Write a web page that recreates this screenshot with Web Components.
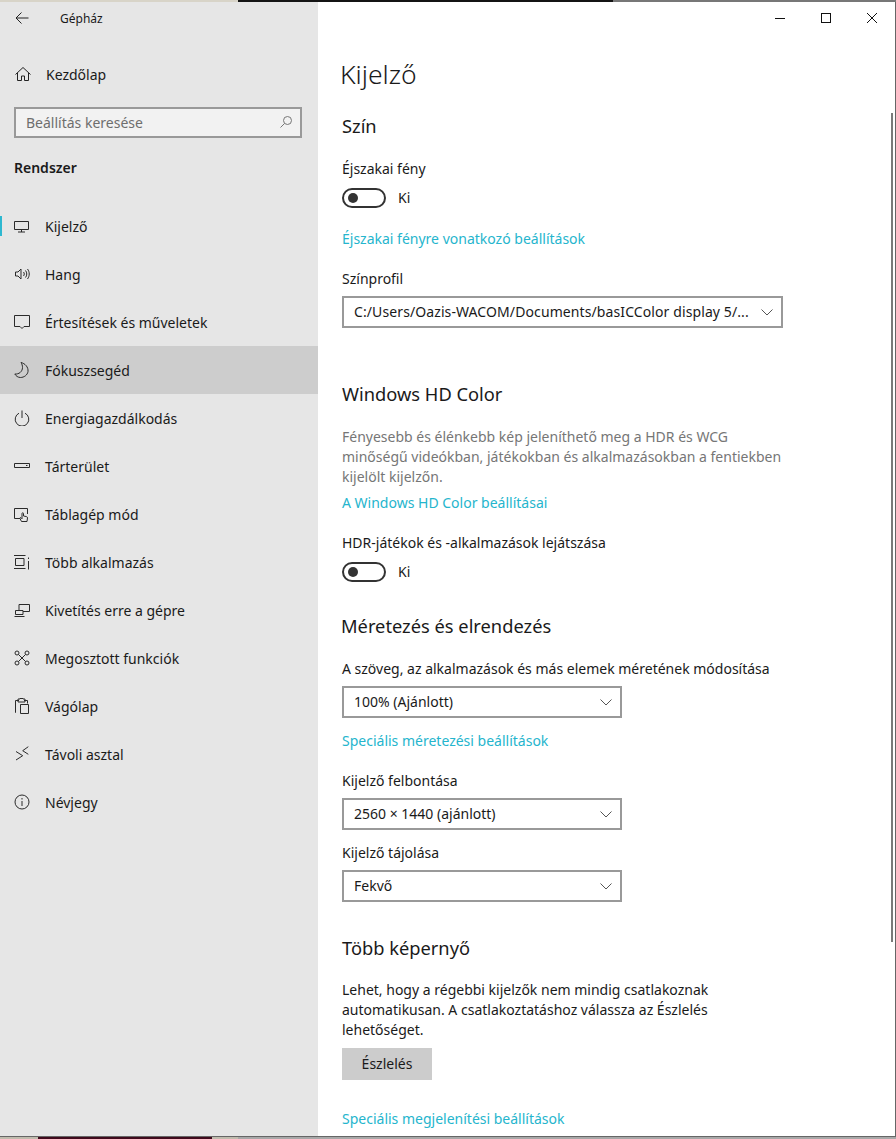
<!DOCTYPE html>
<html lang="hu">
<head>
<meta charset="utf-8">
<title>Gépház</title>
<style>
html, body { margin: 0; height: 100%; overflow: hidden; }
body {
  font-family: "Noto Sans", "Open Sans", sans-serif;
  background:
    linear-gradient(90deg, #d8d4c8 238px, #141414 238px, #141414 613px, #777 613px) top left / 100% 2px no-repeat,
    linear-gradient(90deg, #c0bcae 38px, #3f0a1c 38px, #3f0a1c 212px, #c0bcae 212px, #c0bcae 238px, #a8a8a8 238px) bottom left / 100% 2px no-repeat,
    #a8a8a8;
}
</style>
</head>
<body>

<template id="nav-item-tpl">
  <style>
    :host { display: flex; align-items: center; height: 48px; position: relative; font-size: 14px; color: #1a1a1a; }
    :host([selected]) { background: #cdcdcd; }
    :host([current])::before { content: ""; position: absolute; left: 0; top: 14px; width: 2px; height: 20px; background: #2eb8d0; }
    .ic { width: 16px; height: 16px; margin-left: 14px; flex: none; }
    ::slotted(svg) { display: block; width: 16px; height: 16px; fill: none; stroke: #2b2b2b; stroke-width: 1; }
    .t { margin-left: 15px; white-space: nowrap; }
  </style>
  <span class="ic"><slot name="icon"></slot></span>
  <span class="t"><slot></slot></span>
</template>

<template id="toggle-tpl">
  <style>
    :host { display: flex; align-items: center; height: 20px; font-size: 14px; color: #1a1a1a; }
    .track { width: 44px; height: 20px; box-sizing: border-box; border: 2px solid #333; border-radius: 10px; display: flex; align-items: center; padding-left: 4px; }
    .knob { width: 10px; height: 10px; border-radius: 50%; background: #333; }
    .t { margin-left: 12px; }
  </style>
  <span class="track"><span class="knob"></span></span>
  <span class="t"><slot></slot></span>
</template>

<template id="combo-tpl">
  <style>
    :host { display: flex; align-items: center; box-sizing: border-box; height: 32px; border: 2px solid #999; background: #fff; font-size: 14px; color: #1a1a1a; padding: 0 8px 0 10px; width: 280px; }
    .t { flex: 1; white-space: nowrap; overflow: hidden; }
    svg { width: 12px; height: 7px; fill: none; stroke: #555; stroke-width: 1; flex: none; margin-left: 8px; }
  </style>
  <span class="t"><slot></slot></span>
  <svg viewBox="0 0 12 7"><path d="M.5 .5 6 6l5.5-5.5"/></svg>
</template>

<template id="settings-window-tpl">
  <style>
    :host { display: block; box-sizing: border-box; height: 1139px; }
    .frame { height: 1135px; margin-top: 2px; display: flex; background: #fff; border-right: 1px solid #666; border-bottom: 1px solid #666; box-sizing: border-box; position: relative; }
    .side { width: 318px; background: #e6e6e6; flex: none; }
    .main { flex: 1; min-width: 0; }
  </style>
  <div class="frame">
    <div class="side"><slot name="side"></slot></div>
    <div class="main"><slot></slot></div>
  </div>
</template>

<template id="sidebar-tpl">
  <style>
    :host { display: block; color: #1a1a1a; }
    .title { height: 32px; display: flex; align-items: center; font-size: 12px; }
    .title svg { width: 14px; height: 14px; margin-left: 15px; fill: none; stroke: #222; stroke-width: 1; }
    .title span { margin-left: 31px; }
    .home { display: flex; align-items: center; height: 48px; margin-top: 16px; font-size: 14px; }
    .home svg { width: 16px; height: 16px; margin-left: 15px; fill: none; stroke: #222; stroke-width: 1; }
    .home span { margin-left: 15px; }
    .search { margin: 9px 0 0 14px; width: 288px; height: 31px; box-sizing: border-box; border: 2px solid #999; background: #f2f2f2; display: flex; align-items: center; padding: 0 8px 1px 10px; font-size: 14px; color: #6e6e6e; }
    .search span { flex: 1; }
    .search svg { width: 12px; height: 12px; fill: none; stroke: #777; stroke-width: 1; }
    h2 { margin: 20px 0 0 14px; font-size: 14px; font-weight: 600; line-height: 20px; height: 20px; }
    .nav { margin-top: 24px; }
  </style>
  <div class="title">
    <svg viewBox="0 0 14 14"><path d="M1 7h12.500M6.500 1.500 1 7l5.500 5.500"/></svg>
    <span>Gépház</span>
  </div>
  <div class="home">
    <svg viewBox="0 0 16 16"><path d="M.5 8.500 8 1.500l7.500 7M2.500 7v7.500h4V10h3v4.500h4V7"/></svg>
    <span>Kezdőlap</span>
  </div>
  <div class="search">
    <span>Beállítás keresése</span>
    <svg viewBox="0 0 12 12"><circle cx="7.500" cy="4.500" r="4"/><path d="M4.500 7.500 .5 11.500"/></svg>
  </div>
  <h2>Rendszer</h2>
  <div class="nav"><slot></slot></div>
</template>

<template id="titlebar-tpl">
  <style>
    :host { display: flex; justify-content: flex-end; height: 32px; }
    span { width: 46px; height: 32px; display: flex; align-items: center; justify-content: center; }
    svg { width: 10px; height: 10px; fill: none; stroke: #111; stroke-width: 1; shape-rendering: crispEdges; }
    .x { shape-rendering: auto; }
  </style>
  <span><svg viewBox="0 0 10 10"><path d="M0 5.500h10"/></svg></span>
  <span><svg viewBox="0 0 10 10"><path d="M.5 .5h9v9h-9z"/></svg></span>
  <span><svg class="x" viewBox="0 0 10 10"><path d="M0 0l10 10M10 0 0 10"/></svg></span>
</template>

<template id="display-page-tpl">
  <style>
    :host { display: block; position: relative; padding-left: 24px; color: #1a1a1a; font-size: 14px; line-height: 20px; }
    h1 { font-size: 26.500px; font-weight: 300; line-height: 36px; margin: 0 0 0 -2px; }
    .wrap { padding-top: 22px; }
    h3 { font-size: 18.300px; font-weight: 400; line-height: 24px; margin: 0; }
    .lbl { margin: 0; }
    a { color: #25b5cd; text-decoration: none; display: block; }
    .muted { color: #767676; width: 440px; }
    .bar { position: absolute; right: 2px; top: 79px; width: 2px; height: 829px; background: #7a7a7a; }
    .btn { display: flex; align-items: center; justify-content: center; width: 90px; height: 32px; background: #ccc; }
  </style>
  <div class="wrap">
    <h1>Kijelző</h1>
    <h3 style="margin-top:22px">Szín</h3>
    <p class="lbl" style="margin-top:21px">Éjszakai fény</p>
    <ui-toggle style="margin-top:9px">Ki</ui-toggle>
    <a href="#" style="margin-top:21px">Éjszakai fényre vonatkozó beállítások</a>
    <p class="lbl" style="margin-top:20px">Színprofil</p>
    <ui-combo style="margin-top:7px;width:441px;letter-spacing:.1px">C:/Users/Oazis-WACOM/Documents/basICColor display 5/...</ui-combo>
    <h3 style="margin-top:54px">Windows HD Color</h3>
    <p class="lbl muted" style="margin-top:21px">Fényesebb és élénkebb kép jeleníthető meg a HDR és WCG minőségű videókban, játékokban és alkalmazásokban a fentiekben kijelölt kijelzőn.</p>
    <a href="#" style="margin-top:6px">A Windows HD Color beállításai</a>
    <p class="lbl" style="margin-top:20px">HDR-játékok és -alkalmazások lejátszása</p>
    <ui-toggle style="margin-top:9px">Ki</ui-toggle>
    <h3 style="margin-top:32px;margin-left:-1px">Méretezés és elrendezés</h3>
    <p class="lbl" style="margin-top:21px">A szöveg, az alkalmazások és más elemek méretének módosítása</p>
    <ui-combo style="margin-top:7px">100% (Ajánlott)</ui-combo>
    <a href="#" style="margin-top:13px">Speciális méretezési beállítások</a>
    <p class="lbl" style="margin-top:20px">Kijelző felbontása</p>
    <ui-combo style="margin-top:7px">2560 × 1440 (ajánlott)</ui-combo>
    <p class="lbl" style="margin-top:13px">Kijelző tájolása</p>
    <ui-combo style="margin-top:7px">Fekvő</ui-combo>
    <h3 style="margin-top:34px">Több képernyő</h3>
    <p class="lbl" style="margin-top:20px;width:440px">Lehet, hogy a régebbi kijelzők nem mindig csatlakoznak automatikusan. A csatlakoztatáshoz válassza az Észlelés lehetőséget.</p>
    <div class="btn" style="margin-top:8px">Észlelés</div>
    <a href="#" style="margin-top:29px">Speciális megjelenítési beállítások</a>
  </div>
  <div class="bar"></div>
</template>

<settings-window>
  <settings-sidebar slot="side">
    <nav-item current><svg slot="icon" viewBox="0 0 16 16"><path d="M.5 3.500h14v8H.5zM7.500 11.500v2.500M4 14h7"/></svg>Kijelző</nav-item>
    <nav-item><svg slot="icon" viewBox="0 0 16 16"><path d="M1.500 6H4l3-3v10l-3-3H1.500zM9.500 6c1 1.200 1 2.800 0 4M11.500 4.500c1.700 2 1.700 5 0 7M13.500 3c2.300 3 2.300 7 0 10"/></svg>Hang</nav-item>
    <nav-item><svg slot="icon" viewBox="0 0 16 16"><path d="M.5 1.500h15v11H10L8 14.500 6 12.500H.5z"/></svg>Értesítések és műveletek</nav-item>
    <nav-item selected><svg slot="icon" viewBox="0 0 16 16"><path d="M7 .5C11 1.500 14.500 5 14 9.500 13.500 13 10 15.500 6.500 15.500 4 15.500 2 14 .8 12 5 12.500 8.500 9.500 8.500 5.500 8.500 3.800 8 2 7 .5z"/></svg>Fókuszsegéd</nav-item>
    <nav-item><svg slot="icon" viewBox="0 0 16 16"><path d="M8 .5v7.500M5 3.200a6.800 6.800 0 1 0 6 0"/></svg>Energiagazdálkodás</nav-item>
    <nav-item><svg slot="icon" viewBox="0 0 16 16"><path d="M.5 5.500h15v4H.5zM12 7.500h1.500"/></svg>Tárterület</nav-item>
    <nav-item><svg slot="icon" viewBox="0 0 16 16"><path d="M6 12.500H.5v-10h13V8M7.500 15.500 6 12.500c-.3-.8.5-1.200 1-.7l1 1V7.500c0-1 1.500-1 1.500 0V10l3 .6c.8.2 1 .7 1 1.400l-.5 3.500z"/></svg>Táblagép mód</nav-item>
    <nav-item><svg slot="icon" viewBox="0 0 16 16"><path d="M0 1.500h11.500M0 14.500h11.500M1.500 4.500h8.500v7H1.500zM14.500 3.500v1.500M14.500 7v8.500"/></svg>Több alkalmazás</nav-item>
    <nav-item><svg slot="icon" viewBox="0 0 16 16"><path d="M5 8V2.500h10.500v7H9M1.500 8.500h7.500v4H1.500zM.5 14.500h10"/></svg>Kivetítés erre a gépre</nav-item>
    <nav-item><svg slot="icon" viewBox="0 0 16 16"><circle cx="3" cy="3" r="2"/><circle cx="13" cy="3" r="2"/><circle cx="3" cy="13" r="2"/><circle cx="13" cy="13" r="2"/><path d="M4.500 4.500l7 7M11.500 4.500l-7 7"/></svg>Megosztott funkciók</nav-item>
    <nav-item><svg slot="icon" viewBox="0 0 16 16"><path d="M2 14.500h-.5V2.500H5M10 2.500h3.500v3M4 1v3h7V1H9V.5H6V1zM6.500 6.500h8v9h-8z"/></svg>Vágólap</nav-item>
    <nav-item><svg slot="icon" viewBox="0 0 16 16"><path d="M2 5.500l6.700 4.200L2 14M14.300 .7 8.700 4.700l5.600 3.600"/></svg>Távoli asztal</nav-item>
    <nav-item><svg slot="icon" viewBox="0 0 16 16"><circle cx="8" cy="8" r="7"/><path d="M8 7v5M8 4v1.500"/></svg>Névjegy</nav-item>
  </settings-sidebar>
  <win-titlebar></win-titlebar>
  <display-page></display-page>
</settings-window>

<script>
function define(tag, tplId) {
  customElements.define(tag, class extends HTMLElement {
    constructor() {
      super()
      this.attachShadow({ mode: 'open' })
      this.shadowRoot.appendChild(document.getElementById(tplId).content.cloneNode(true))
    }
  })
}
define('nav-item', 'nav-item-tpl')
define('ui-toggle', 'toggle-tpl')
define('ui-combo', 'combo-tpl')
define('settings-window', 'settings-window-tpl')
define('settings-sidebar', 'sidebar-tpl')
define('win-titlebar', 'titlebar-tpl')
define('display-page', 'display-page-tpl')
</script>
</body>
</html>
